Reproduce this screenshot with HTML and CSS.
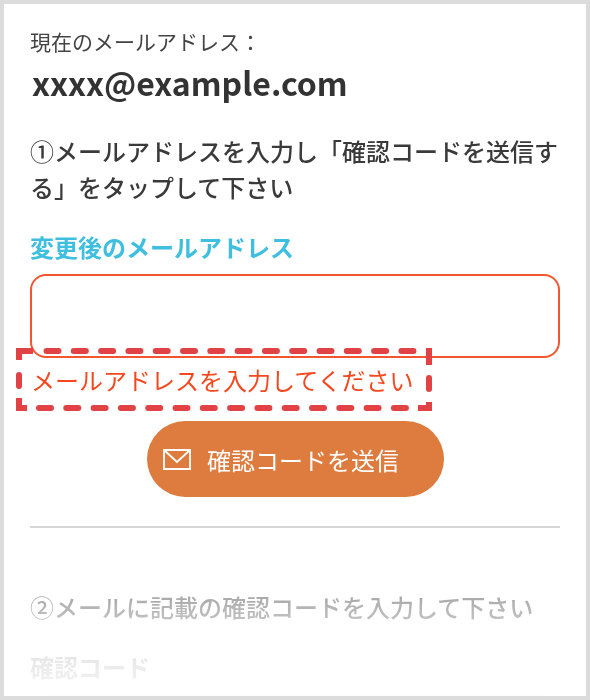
FILE: index.html
```html
<!DOCTYPE html>
<html lang="ja">
<head>
<meta charset="utf-8">
<title>メールアドレス変更</title>
<link rel="stylesheet" href="styles.css">
</head>
<body>
<main class="frame">
  <div class="content">
    <p class="current-label">現在のメールアドレス：</p>
    <p class="current-email">xxxx@example.com</p>
    <p class="step step-one">①メールアドレスを入力し「確認コードを送信する」をタップして下さい</p>
    <label class="field-label" for="new-mail">変更後のメールアドレス</label>
    <input class="text-input" id="new-mail" type="text">
    <div class="error-wrap">
      <p class="error">メールアドレスを入力してください</p>
      <svg class="dash-box" viewBox="0 0 416 62" aria-hidden="true">
        <path class="dash-corner" d="M17 3H3V12M3 50V60H11M402 60H413V54M413 0V17"/>
        <path class="dash-line" d="M30.5 3H398"/>
        <path class="dash-line" d="M23 60H392"/>
        <path class="dash-line" d="M3 27V38"/>
        <path class="dash-line" d="M413 30V41"/>
      </svg>
    </div>
    <button class="send" type="button">
      <svg class="mail-icon" viewBox="0 0 28 21" aria-hidden="true">
        <path d="M1 1H27V20H1ZM1 1L14 13L27 1"/>
      </svg>
      <span>確認コードを送信</span>
    </button>
    <hr class="divider">
    <p class="step step-two">②メールに記載の確認コードを入力して下さい</p>
    <p class="field-label code-label">確認コード</p>
    <div class="text-input code-input"></div>
  </div>
  <div class="fade"></div>
</main>
</body>
</html>
```
FILE: styles.css
```css
* { box-sizing: border-box; }
html, body { margin: 0; padding: 0; background: #fff; }
body { font-family: "Noto Sans CJK JP", "Noto Sans", sans-serif; color: #333; }
p { margin: 0; }

.frame {
  position: relative;
  width: 590px;
  height: 700px;
  border: 4px solid #dcdcdc;
  background: #fff;
  overflow: hidden;
}
.content { padding: 21px 26px 0; filter: blur(0.4px); }

.current-label { font-size: 21px; line-height: 32px; color: #444; }
.current-email { font-size: 32px; line-height: 44px; font-weight: 700; color: #333; margin-top: 3px; padding-left: 2px; margin-bottom: 1px; }
.step { font-size: 24px; line-height: 36px; font-weight: 500; color: #3a3a3a; }
.step-one { margin-top: 29px; }

.field-label { display: block; font-size: 24px; line-height: 36px; font-weight: 700; color: #3fbfdf; margin-top: 24px; }

.text-input {
  display: block;
  width: 100%;
  height: 84px;
  margin-top: 9px;
  border: 2px solid #f2552f;
  border-radius: 16px;
  background: #fff;
}

.error-wrap { position: relative; height: 52px; margin: -10px -14px 0; padding: 14px 0 0 15px; width: 416px; }
.error { font-size: 24px; line-height: 36px; color: #f4481f; }
.dash-box { position: absolute; left: 0; top: 0; width: 416px; height: 62px; overflow: visible; }
.dash-corner { fill: none; stroke: #e04245; stroke-width: 6; }
.dash-line { fill: none; stroke: #e04245; stroke-width: 6; stroke-linecap: round; stroke-dasharray: 12 15.3; }

.send {
  display: flex;
  align-items: center;
  gap: 16px;
  width: 297px;
  height: 76px;
  margin: 21px 0 0 117px;
  padding: 0 0 0 16px;
  border: 0;
  border-radius: 38px;
  background: #dd7c3e;
  color: #fff;
  font: inherit;
  font-size: 24px;
}
.mail-icon { width: 28px; height: 21px; flex: none; }
.mail-icon path { fill: none; stroke: #fff; stroke-width: 1.8; }

.divider { height: 2px; margin: 29px 0 0; border: 0; background: #d6d6d6; }

.step-two { margin-top: 61px; }
.code-label { color: #333; margin-top: 24px; }
.code-input { border-color: #ccc; margin-top: 10px; }

.fade {
  position: absolute;
  left: 0;
  right: 0;
  top: 540px;
  bottom: 0;
  background: linear-gradient(to bottom, rgba(255,255,255,.35) 0, rgba(255,255,255,.55) 50px, rgba(255,255,255,.88) 110px, rgba(255,255,255,.97) 156px);
}
```
